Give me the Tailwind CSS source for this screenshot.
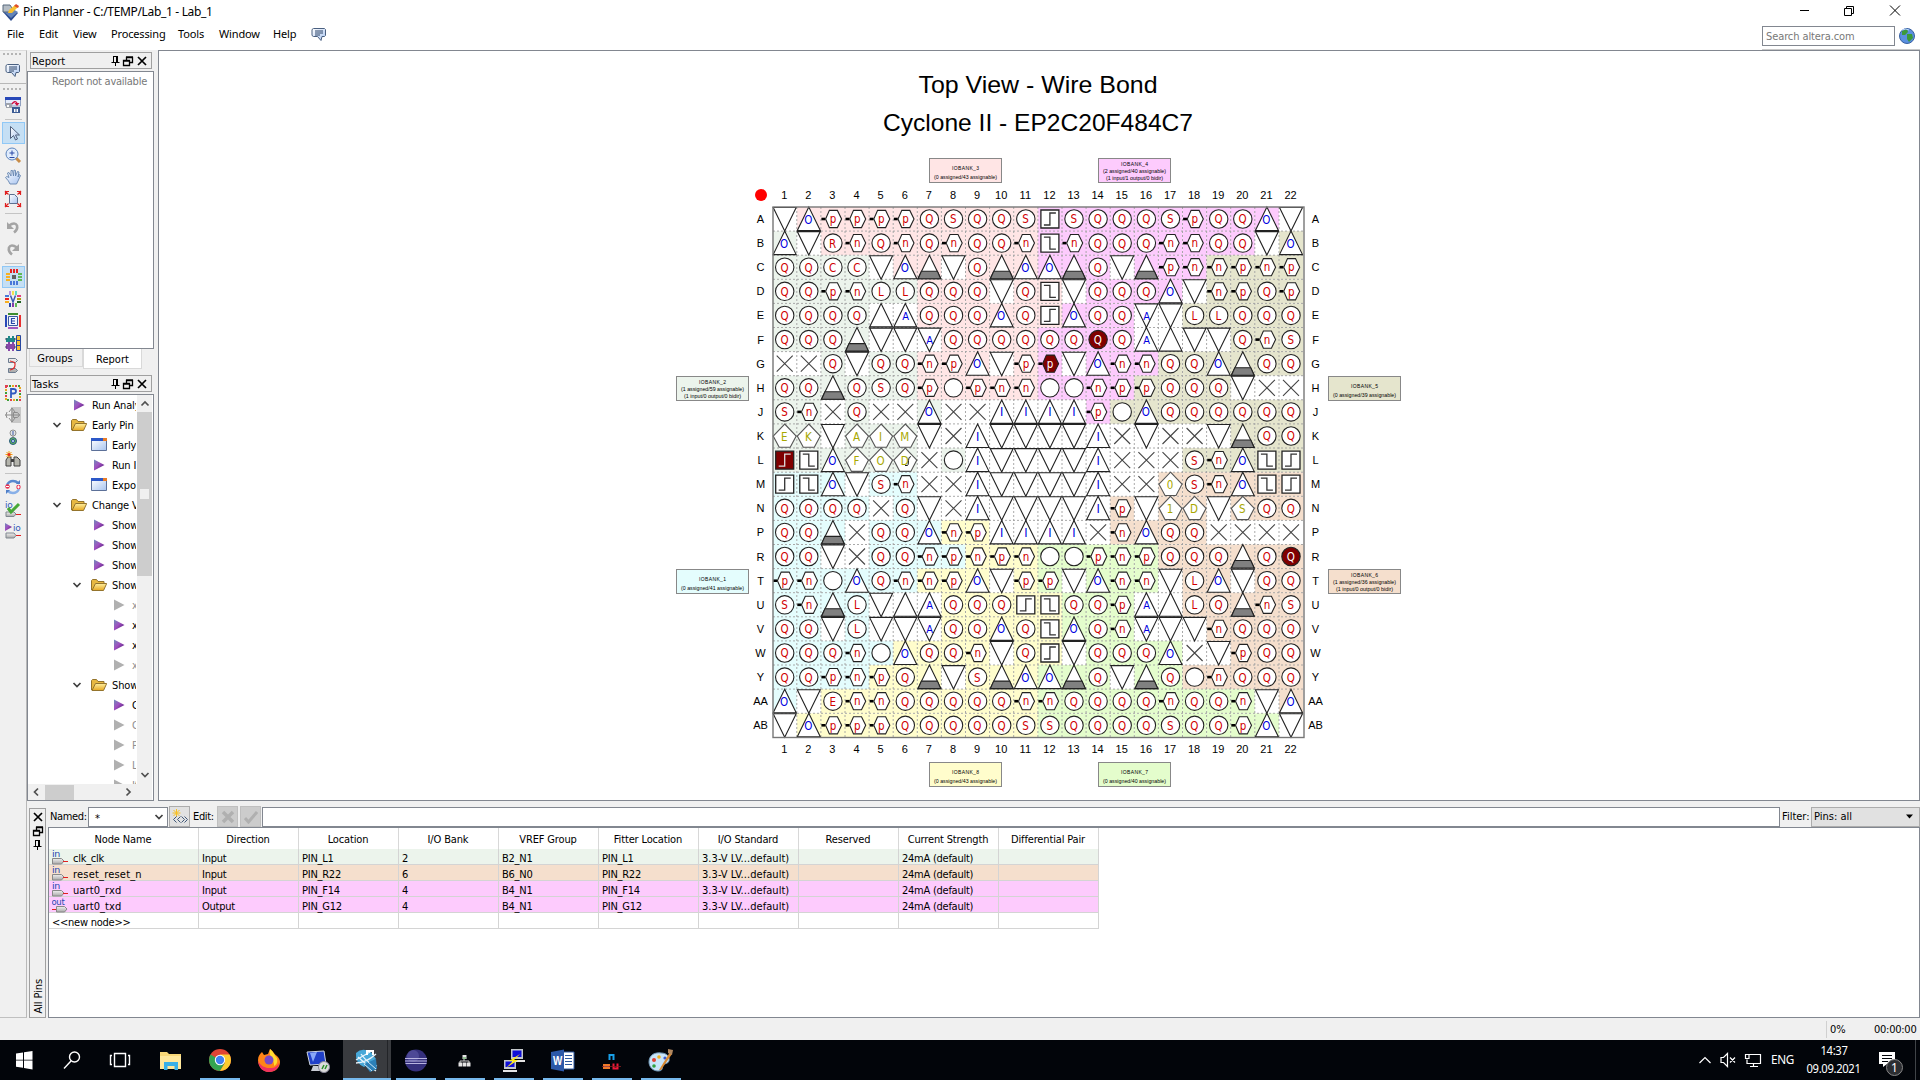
<!DOCTYPE html>
<html lang="en">
<head>
<meta charset="utf-8">
<title>Pin Planner - C:/TEMP/Lab_1 - Lab_1</title>
<script src="https://cdn.jsdelivr.net/npm/@tailwindcss/browser@4"></script>
</head>
<body class="w-[1920px] h-[1080px] overflow-hidden bg-[#f0f0f0] flex flex-col font-['DejaVu_Sans_Condensed','DejaVu_Sans',sans-serif] text-[11px] leading-4 text-black tracking-[-0.35px]">

<svg class="absolute w-0 h-0">
  <defs>
    <linearGradient id="gp" x1="0" y1="0" x2="1" y2="1"><stop offset="0" stop-color="#6f8fb8"/><stop offset=".45" stop-color="#a050c0"/><stop offset="1" stop-color="#40106a"/></linearGradient>
    <linearGradient id="gf" x1="0" y1="0" x2="0" y2="1"><stop offset="0" stop-color="#fff0a0"/><stop offset="1" stop-color="#e8a820"/></linearGradient>
    <linearGradient id="gb" x1="0" y1="0" x2="1" y2="1"><stop offset="0" stop-color="#ffffff"/><stop offset="1" stop-color="#a8c4f0"/></linearGradient>
    <linearGradient id="gg" x1="0" y1="0" x2="0" y2="1"><stop offset="0" stop-color="#f0f0f0"/><stop offset="1" stop-color="#a8a8a8"/></linearGradient>
    <symbol id="chat" viewBox="0 0 16 16"><path d="M2.500 1.500h11l1 1v6l-1 1H11l-1 4-3.500-4h-4l-1.500-1v-6z" fill="url(#gb)" stroke="#4a6080"/><path d="M4 4h8M4 6h8M4 8h5" stroke="#2c4468" fill="none"/></symbol>
    <symbol id="pin" viewBox="0 0 12 12"><path d="M3.500 1v6M3.500 1.500h4M1.500 7.500h8M5.500 7v4" stroke="#000" fill="none"/><path d="M7 1v6" stroke="#000" stroke-width="2"/></symbol>
    <symbol id="dock" viewBox="0 0 12 12"><path d="M4.500 5V2.500h6v5H8M4 2h7M1.500 5.500h6v5h-6zM1 6h7" stroke="#000" fill="none" stroke-width="1.300"/></symbol>
    <symbol id="close" viewBox="0 0 12 12"><path d="M2 2l8 8M10 2l-8 8" stroke="#000" fill="none" stroke-width="1.700"/></symbol>
    <symbol id="play" viewBox="0 0 16 16"><path d="M3 2.500v11L13.500 8z" fill="url(#gp)"/></symbol>
    <symbol id="playg" viewBox="0 0 16 16"><path d="M3 2.500v11L13.500 8z" fill="#b0b0b0"/></symbol>
    <symbol id="folder" viewBox="0 0 16 16"><path d="M.5 13V3.500l1-1h4l1.500 2h6V7" fill="#e8b840" stroke="#94742c"/><path d="M1 13.500L4.500 6.500h11.200L12.500 13.500z" fill="url(#gf)" stroke="#94742c"/></symbol>
    <symbol id="win" viewBox="0 0 16 16"><path d="M.5 2.500h15v11H.5z" fill="url(#gb)" stroke="#5c7098"/><path d="M0 1h12v3H0z" fill="#2c58c8"/><path d="M12 1h4v3h-4z" fill="#e87c28"/></symbol>
    <symbol id="chev" viewBox="0 0 12 12"><path d="M2.500 4L6 7.500 9.500 4" stroke="#404040" fill="none" stroke-width="1.700"/></symbol>
    <symbol id="nodein" viewBox="0 0 16 16"><path d="M.5 9.500h9l2.500 2.500-2.500 3H.5z" fill="url(#gg)" stroke="#888"/><path d="M11 12.500h5" stroke="#e02020"/><text x="0" y="7.500" font-size="9.500" fill="#2848b0" font-family="DejaVu Sans">in</text></symbol>
    <symbol id="nodeout" viewBox="0 0 16 16"><path d="M4.500 9.500h8l2.500 2.500-2.500 3h-8z" fill="url(#gg)" stroke="#888"/><path d="M0 12.500h4" stroke="#e02020"/><text x="-.5" y="7.500" font-size="8.500" fill="#2848b0" font-family="DejaVu Sans">out</text></symbol>
  </defs>
</svg>

<!-- title bar -->
<header class="h-[22px] shrink-0 bg-white flex items-center justify-between">
  <div class="flex items-center pl-0.5 pt-0.5 gap-1">
    <svg class="w-[17px] h-[17px]" viewBox="0 0 17 17"><path d="M1 8l8-3 7 4-7 8z" fill="#2c4c90"/><path d="M1 7l8-3 7 4-7 6z" fill="#6484b8"/><path d="M1 1h7l2 3-2 4H1z" fill="#b4bcc4" stroke="#56687c"/><path d="M6 9l1-3 6-5 3 2-6 6z" fill="#f8c030"/><path d="M12 2l2-2 3 2-1 2z" fill="#e04c28"/></svg>
    <span class="font-['Noto_Sans','Open_Sans',sans-serif] text-[12px] tracking-[-0.33px]">Pin Planner - C:/TEMP/Lab_1 - Lab_1</span>
  </div>
  <svg class="w-[120px] h-[22px]" viewBox="1800 0 120 22" fill="none" stroke="#000"><path d="M1799 10.500h10M1844.500 8.500h7v7h-7zM1846.500 8V6.500h7v7H1852M1890 5.500l10 10M1900 5.500l-10 10"/></svg>
</header>

<!-- menu bar -->
<nav class="h-7 shrink-0 bg-white flex justify-between">
  <div class="flex items-center h-6 pl-[7px] font-['Noto_Sans',sans-serif] text-[11px] tracking-[-0.15px]">
    <span class="w-8">File</span><span class="w-[34px]">Edit</span><span class="w-[38px]">View</span><span class="w-[67px]">Processing</span><span class="w-[41px]">Tools</span><span class="w-[54px]">Window</span><span class="w-[38px]">Help</span>
    <svg class="w-4 h-4 mt-px"><use href="#chat"/></svg>
  </div>
  <div class="flex items-start gap-1 pt-1 pr-[5px] border-b border-[#c8c8c8]">
    <div class="w-[133px] h-5 border border-[#828790] text-[#787878] pl-[3px] leading-[19px] tracking-[-0.1px]">Search altera.com</div>
    <svg class="w-4 h-4 mt-0.5" viewBox="0 0 16 16"><circle cx="8" cy="8" r="7.500" fill="#5a90e0" stroke="#3860a0"/><path d="M3 3l5-2 1 3-3 3-3 0zM8 6l5 0 1 4-4 4-2-3z" fill="#3c9a3c"/><path d="M3 2q4-2 7 0" stroke="#c0d8ff" fill="none"/></svg>
  </div>
</nav>

<div class="h-[968px] shrink-0 flex">
  <!-- vertical toolbar -->
  <aside id="tools" class="w-[27px] shrink-0 border-r border-[#b8b8b8] border-t border-t-[#dcdcdc] border-b border-b-[#c0c0c0] flex flex-col"></aside>

  <main class="flex-1 flex flex-col min-w-0">
    <div class="h-[751px] flex">
      <!-- docks -->
      <section class="w-[128px] shrink-0 flex flex-col">
        <div class="mt-0.5 ml-[3px] w-[122px] h-[17px] border border-[#a0a0a0] flex items-center pl-px">
          <span class="flex-1 pt-[3px] tracking-[0.1px]">Report</span>
          <svg class="w-3 h-3"><use href="#pin"/></svg><svg class="w-3 h-3"><use href="#dock"/></svg><svg class="w-3 h-3 ml-0.5 mr-[3px]"><use href="#close"/></svg>
        </div>
        <div class="mt-0.5 h-[278px] w-[127px] border border-[#828790] bg-white text-[#787878] text-right pr-1.5 pt-0.5 tracking-[-0.25px]">Report not available</div>
        <div class="h-[20px] flex pl-0.5 items-start tracking-[0px]">
          <div class="w-[54px] h-[18px] border border-[#d9d9d9] border-t-0 text-center leading-[19px] pr-0.5">Groups</div>
          <div class="w-[59px] h-[20px] border border-[#d9d9d9] border-t-0 bg-white text-center leading-[21px]">Report</div>
        </div>
        <div class="mt-1.5 ml-[3px] w-[122px] h-[17px] border border-[#a0a0a0] flex items-center pl-px">
          <span class="flex-1 pt-[3px] tracking-[0.1px]">Tasks</span>
          <svg class="w-3 h-3"><use href="#pin"/></svg><svg class="w-3 h-3"><use href="#dock"/></svg><svg class="w-3 h-3 ml-0.5 mr-[3px]"><use href="#close"/></svg>
        </div>
        <div class="mt-0.5 h-[407px] w-[127px] border border-[#828790] bg-white flex flex-col">
          <div class="h-[389px] flex">
            <div id="tree" class="w-[108px] h-full overflow-hidden"></div>
            <div class="w-[15px] ml-px bg-[#f0f0f0] flex flex-col items-center">
              <svg class="h-[17px] w-3" viewBox="0 0 12 17"><path d="M2.500 10.500L6 7l3.500 3.500" stroke="#505050" fill="none" stroke-width="1.700"/></svg>
              <div class="h-[164px] w-[15px] bg-[#cdcdcd] flex flex-col items-center pt-[77px]"><div class="w-[9px] h-2.5 bg-[#f0f0f0]"></div></div>
              <div class="flex-1"></div>
              <svg class="h-[17px] w-3" viewBox="0 0 12 17"><path d="M2.500 6L6 9.500 9.500 6" stroke="#505050" fill="none" stroke-width="1.700"/></svg>
            </div>
          </div>
          <div class="h-4 w-[124px] bg-[#f0f0f0] flex items-center">
            <svg class="w-[17px] h-4" viewBox="0 0 17 16"><path d="M10 4.500L6.500 8l3.500 3.500" stroke="#505050" fill="none" stroke-width="1.700"/></svg>
            <div class="w-[29px] h-[15px] bg-[#cdcdcd]"></div><div class="flex-1"></div>
            <svg class="w-[32px] h-4" viewBox="0 0 32 16"><path d="M6.500 4.500L10 8l-3.500 3.500" stroke="#505050" fill="none" stroke-width="1.700"/></svg>
          </div>
        </div>
      </section>
      <!-- package view -->
      <section class="ml-[3px] w-[1762px] h-[751px] border border-[#828790] bg-white overflow-hidden">
        <svg id="chip" class="block w-[1760px] h-[749px]" viewBox="159 51 1760 749"></svg>
      </section>
    </div>

    <!-- all pins -->
    <div class="flex-1 flex pt-[5px]">
      <div class="ml-0.5 mt-[2px] w-[17px] h-[210px] border border-[#a0a0a0] flex flex-col items-center">
        <svg class="w-3 h-3 mt-0.5"><use href="#close"/></svg>
        <svg class="w-3 h-3 mt-0.5"><use href="#dock"/></svg>
        <svg class="w-3 h-3 mt-0.5"><use href="#pin"/></svg>
        <div class="flex-1"></div>
        <span class="[writing-mode:vertical-rl] rotate-180 mb-[3px] ml-0.5 tracking-[-0.1px]">All Pins</span>
      </div>
      <div class="ml-0.5 flex-1 flex flex-col">
        <div class="h-[21px] flex items-center">
          <span class="w-[40px] pl-0.5">Named:</span>
          <div class="w-[80px] h-5 border border-[#828790] bg-white flex items-center justify-between pl-1.5 pr-0.5"><span class="pt-1">*</span><svg class="w-3 h-3"><use href="#chev"/></svg></div>
          <div class="ml-px w-[21px] h-[21px] border border-[#acacac] bg-[#e1e1e1] grid place-items-center"><svg class="w-4 h-4" viewBox="0 0 16 16" fill="none"><path d="M4.500 0v8M.5 4h8M1.500 1l6 6M7.500 1l-6 6" stroke="#f8c020"/><path d="M4.500 7.500L1.500 10.500l3 3M8.500 7.500l-3 3 3 3M9.500 7.500l3 3-3 3M12.500 7.500l3 3-3 3" stroke="#405878"/></svg></div>
          <span class="ml-[3px] w-6">Edit:</span>
          <div class="w-[21px] h-[21px] bg-[#cccccc] border border-[#bfbfbf] grid place-items-center"><svg class="w-[14px] h-[14px]" viewBox="0 0 14 14"><path d="M2 2l10 10M12 2L2 12" stroke="#b0b0b0" stroke-width="3.500"/></svg></div>
          <div class="ml-0.5 w-[21px] h-[21px] bg-[#cccccc] border border-[#bfbfbf] grid place-items-center"><svg class="w-[14px] h-[14px]" viewBox="0 0 14 14" fill="none"><path d="M1 8l3.500 4L13 2" stroke="#b0b0b0" stroke-width="3"/></svg></div>
          <div class="ml-px w-[1518px] h-5 border border-[#828790] bg-white"></div>
          <span class="ml-0.5 w-[29px] whitespace-nowrap tracking-[0px]">Filter:</span>
          <div class="flex-1 h-5 border border-[#acacac] bg-[#e1e1e1] flex items-center justify-between pl-0.5 pr-1.5 tracking-[0px]"><span>Pins: all</span><svg class="w-[7px] h-[5px]" viewBox="0 0 7 5"><path d="M0 .5h7L3.500 4.500z"/></svg></div>
        </div>
        <div class="h-[191px] border border-[#828790] bg-white">
          <div id="pins" class="grid w-[1050px] grid-cols-[150px_repeat(9,100px)]"></div>
        </div>
      </div>
    </div>
  </main>
</div>

<!-- status bar -->
<footer class="h-[22px] shrink-0 flex items-center justify-end">
  <div class="h-[17px] border-l border-[#d0d0d0] w-[48px] pl-[3px] pt-px tracking-[0px]">0%</div>
  <div class="w-[46px] whitespace-nowrap pt-px tracking-[-0.25px]">00:00:00</div>
</footer>

<!-- taskbar -->
<div class="h-10 shrink-0 bg-[#02050a]">
<svg class="block w-[1920px] h-10" viewBox="0 0 1920 40">
  <g fill="#fff"><path d="M16 13.500l7-1v7.200h-7zM24 12.300l8.500-1.300v8.700H24zM16 20.600h7v7.200l-7-1zM24 20.600h8.500v8.800L24 28.100z"/></g>
  <g fill="none" stroke="#fff" stroke-width="1.400"><circle cx="74.500" cy="17" r="5"/><path d="M71 21l-7 7.500"/><path d="M114.500 13.500h11v13h-11zM112 15.500h-1.500v9h1.500M128 15.500h1.500v9H128"/></g>
  <path d="M160 12h7l2 2h12v15h-21z" fill="#f8d878"/><path d="M160 16h21v13h-21z" fill="#ffe89c"/><path d="M164 22h14v8h-3.500v-4h-7v4H164z" fill="#38b0e8"/>
  <circle cx="220" cy="20" r="11" fill="#e04434"/><path d="M220 20L210.500 14.500A11 11 0 0 0 220 31l4.800-8.200z" fill="#34a450"/><path d="M220 31A11 11 0 0 0 229.500 14.500H220l5 8.200z" fill="#fccc30"/><circle cx="220" cy="20" r="5.200" fill="#fff"/><circle cx="220" cy="20" r="4.200" fill="#4080f0"/>
  <path d="M258 20c0-4 2-6 4-8l2 3 4-1 2-5c4 3 4 5 7 7 2 2 3 4 3 6 0 6-5 10-11 10s-11-5-11-12z" fill="#ff8418"/><path d="M258 21c1 7 5 11 11 11s10-4 10-9c-3 5-6 5-10 5s-8-2-11-7z" fill="#f03060"/><path d="M270 9c4 3 4 6 7 9 1 5-1 7-3 8 1-6-6-9-4-17z" fill="#ffdc30"/><circle cx="269" cy="20" r="4.500" fill="#7848c8"/>
  <path d="M307 12l17-1 2 13-16 1z" fill="#2040c8" stroke="#ccd4e0"/><path d="M310 13l7-1-4 10z" fill="#88a8f8"/><path d="M313 26h8l2 5h-12z" fill="#c8ccd4"/><circle cx="324" cy="27" r="5.500" fill="#dcdcdc" stroke="#889"/><path d="M322 29l2-4M325 29l2-4" stroke="#289028" stroke-width="1.500"/>
  <path d="M343 0h48v40h-48z" fill="#393b3f"/><path d="M387.500 0v40" stroke="#222428"/>
  <path d="M356 13q6-6 15-1l5 7-12 8q-9-4-8-14z" fill="#48a8d8"/><path d="M356 20l14-8M356 23q10 0 20-9M358 17q8 8 18 14M361 14q7 10 16 12" stroke="#e8f4fc" fill="none" stroke-width="1.300"/><path d="M364 24l12-5 1 10-7 3z" fill="#2c80b8"/><path d="M364 24l8 7M368 22l8 7" stroke="#d0e8f4"/><path d="M367 15v-4h6v4" stroke="#fff" stroke-width="2" fill="none"/>
  <circle cx="416" cy="20.500" r="11" fill="#35307c"/><circle cx="413" cy="16" r="6" fill="#5e58a8" opacity=".6"/><path d="M405 18.500h22M405 21h22M405.500 23.500h21" stroke="#b8b4e0" stroke-width="1"/>
  <path d="M464 17v4M460 24v-3h9v3" stroke="#ccc" fill="none"/><path d="M462.500 15h4v4h-4zM458.500 22.500h4v4h-4zM463 22.500h3.500v4H463zM467 22.500h3.500v4H467z" fill="#e4e4e4"/><path d="M463 17.500h3v1h-3z" fill="#40a040"/>
  <path d="M511 9h12v10h-12zM504 20h12v9h-12z" fill="#c4c8cc"/><path d="M512.500 10.500h9v6.500h-9zM505.500 21.500h9v5.500h-9z" fill="#1010d8"/><path d="M512 20h13v2h-13zM503 30h14v2h-14z" fill="#e4e4e4"/><path d="M520 14l-11 7 4 0-7 7 12-8-4 0z" fill="#fce818"/>
  <path d="M560 12h14v17h-14z" fill="#fff" stroke="#2c58a0"/><path d="M565 15.500h7M565 18.500h7M565 21.500h7M565 24.500h7" stroke="#2c58a0"/><path d="M551 12l13-2.500v22L551 29z" fill="#2c58a8"/><text x="553" y="25" font-size="12" font-weight="bold" fill="#fff" font-family="Liberation Sans" textLength="9" lengthAdjust="spacingAndGlyphs">W</text>
  <path d="M609.500 20v-5h4v5" fill="none" stroke="#18a0e8" stroke-width="2"/><path d="M603 24h7v5h-7z" fill="#f07828"/><path d="M604 26.500h5" stroke="#fff"/><path d="M613.500 23.500v5h4v-5" fill="none" stroke="#f01838" stroke-width="2"/><path d="M602 26.500h19" stroke="#882020" stroke-width=".8"/>
  <path d="M649 22c0-7 6-10 12-9 6 0 9 4 8 8-1 3-4 2-6 4-1 3 0 6-5 6-5 0-9-4-9-9z" fill="#c8e4f8" stroke="#7098b8"/><circle cx="654" cy="20" r="2" fill="#e04030"/><circle cx="659" cy="17" r="1.800" fill="#f0b020"/><circle cx="654" cy="26" r="1.800" fill="#30a040"/><circle cx="665" cy="18" r="1.600" fill="#3858d0"/><path d="M670 12l-11 18 2 0 11-16z" fill="#d88830"/><path d="M668 9l5 1-1 5-4-2z" fill="#b08860"/>
  <path d="M200 38h40v2h-40zM343 38h48v2h-48zM396 38h40v2h-40zM445 38h40v2h-40zM494 38h40v2h-40zM543 38h40v2h-40zM592 38h40v2h-40zM641 38h40v2h-40z" fill="#76b9ed"/>
  <g fill="none" stroke="#fff" stroke-width="1.200">
    <path d="M1699.500 23l5.500-5.500 5.500 5.500"/>
    <path d="M1721 17.500h2.500l4-4v13l-4-4H1721zM1730 17.500l5 5M1735 17.500l-5 5"/>
    <path d="M1749 14.500h11.500v9H1747v-4M1753.500 24v2M1750 26.500h8M1745.500 14.500h3.500v4h-3.500z"/>
  </g>
  <g fill="#fff" font-family="Noto Sans, sans-serif" font-size="12">
    <text x="1771" y="24" textLength="23" lengthAdjust="spacingAndGlyphs">ENG</text>
    <text x="1820.500" y="15" textLength="27" lengthAdjust="spacingAndGlyphs">14:37</text>
    <text x="1806.500" y="33" textLength="54" lengthAdjust="spacingAndGlyphs">09.09.2021</text>
  </g>
  <path d="M1879 12h16v12h-8l-4 3v-3h-4z" fill="#fff"/><path d="M1882 15.500h10M1882 18.500h10M1882 21.500h6" stroke="#02050a"/>
  <circle cx="1894.500" cy="27.500" r="8" fill="#2c2e32" stroke="#888"/><text x="1891" y="32" font-size="12" fill="#fff" font-family="Noto Sans, sans-serif">1</text>
  <path d="M1915.500 0v40" stroke="#404448"/>
</svg>
</div>

<script>
// ---- vertical toolbar ----
const dots = '<path d="M4 0v2M8 0v2M12 0v2M16 0v2M20 0v2" stroke="#b4b4b4" stroke-width="2"/>';
const icons = {
  chat: '<path d="M2.500 2.500h11l1 1v6l-1 1H11l-1 4-3.500-4h-4l-1.500-1v-6z" fill="url(#gb)" stroke="#4a6080"/><path d="M4 5h8M4 7h8M4 9h5" stroke="#2c4468" fill="none"/>',
  report: '<path d="M.5 1h15v8h-15z" fill="#e4ecfc" stroke="#90a0c0"/><path d="M0 0h16v3H0z" fill="#2848b8"/><path d="M1 6h6v5H1z" fill="#a0a4ac"/><path d="M7 10h8v6H7z" fill="#3c5c94"/><path d="M2 8h2v2H2zM9 12h1.500v3H9zM11.500 12H13v3h-1.500z" fill="#fff"/><path d="M7 7q3-4 5-1" fill="none" stroke="#d01040" stroke-width="1.300"/><path d="M9.500 6h5L12 9z" fill="#d01040"/>',
  arrow: '<path d="M5.500 1.500v12l3-3 2 4.500 2-1-2-4h4z" fill="url(#gb)" stroke="#50607c"/>',
  zoom: '<path d="M11 11l4 4" stroke="#c88c48" stroke-width="3"/><circle cx="7" cy="7" r="6" fill="#e0ecfc" stroke="#5c84bc"/><path d="M4.500 6h5M7 3.500v5M4.500 10.500h5" stroke="#2848a8"/>',
  hand: '<path d="M5 15q-1-3-4.500-6.500 1-2 3.500 0L2.500 4l1.500-.5L6 7V1.500h1.500L8.500 7 9 1l1.500.500V7l2-4.500 1.500.500L13 8l1.500-2.500 1 1L13 12l-1.500 3z" fill="url(#gb)" stroke="#6484b0" stroke-width=".9"/>',
  fit: '<path d="M4.500 3.500h5l3 3v6h-8z" fill="url(#gb)" stroke="#5c7090"/><path d="M0 .5h4M.5 0v4M0 0l3.500 3.500M12 .5h4M15.500 0v4M16 0l-3.500 3.500M0 15.500h4M.5 12v4M0 16l3.500-3.500M12 15.500h4M15.500 12v4M16 16l-3.500-3.500" stroke="#e02020" stroke-width="1.200"/>',
  undo: '<path d="M4 6.500q6-4 8 0 1 4-3 7" fill="none" stroke="#a4a4a4" stroke-width="2.600"/><path d="M2 3v7h7z" fill="#a4a4a4"/>',
  redo: '<path d="M12 6.500q-6-4-8 0-1 4 3 7" fill="none" stroke="#a4a4a4" stroke-width="2.600"/><path d="M14 3v7H7z" fill="#a4a4a4"/>',
  pads: '<path d="M5 0h2v4H5zM8 0h2v4H8zM11 0h2v4h-2z" fill="#e82020"/><path d="M5 12h2v4H5zM8 12h2v4H8zM11 12h2v4h-2z" fill="#4878d8"/><path d="M1 4h4v2H1zM1 7h4v2H1zM1 10h4v2H1z" fill="#f8b020"/><path d="M13 4h4v2h-4zM13 7h4v2h-4zM13 10h4v2h-4z" fill="#60b858"/><path d="M7 6h4v4H7z" fill="#606060"/>',
  v: '<path d="M4 0h2v4H4z" fill="#b894e0"/><path d="M7 0h2v4H7z" fill="#f4e050"/><path d="M10 0h2v4h-2z" fill="#60d8c8"/><path d="M0 4h4v2H0z" fill="#4878d8"/><path d="M0 7h4v2H0z" fill="#e82020"/><path d="M0 10h4v2H0z" fill="#f8b020"/><path d="M12 4h4v2h-4z" fill="#e04080"/><path d="M12 7h4v2h-4z" fill="#b09810"/><path d="M12 10h4v2h-4z" fill="#206020"/><path d="M4 12h2v4H4z" fill="#2848a8"/><path d="M7 12h2v4H7z" fill="#8838a8"/><path d="M10 12h2v4h-2z" fill="#60b858"/><path d="M5.500 4.500L8 11l2.500-6.500" fill="none" stroke="#3858b0" stroke-width="1.500"/>',
  e: '<path d="M3 0h10v2H3z" fill="#3c8c30"/><path d="M3 14h10v2H3z" fill="#a058c0"/><path d="M0 2h2v12H0z" fill="#2848b8"/><path d="M14 2h2v12h-2z" fill="#e83030"/><path d="M3.500 3.500h9v9h-9z" fill="#f0f4ff" stroke="#3858a0"/><path d="M10 5.500H6.500v5H10M6.500 8H10" fill="none" stroke="#2848a8" stroke-width="1.200"/>',
  f: '<path d="M1 3h9v4H1zM3 1h2v8H3zM7 1h2v8H7z" fill="#208888"/><path d="M1 9h9v5H1zM3 7h2v9H3zM7 7h2v9H7z" fill="#8848a8"/><path d="M0 4h2M0 12h2M9 4h2M9 12h2" stroke="#404860"/><path d="M11.500.5h4v15h-4z" fill="#f8c030" stroke="#2848a0"/><path d="M11.500 5.500h4M11.500 10.500h4" stroke="#2848a0"/>',
  link: '<path d="M3.500 1.500h7l2 2-2 2h-7zM3.500 11.500h7l2 2-2 2h-7z" fill="url(#gg)" stroke="#6c7c90"/><path d="M5 4q6 1 5 4 0 4-5 5" fill="none" stroke="#e02828" stroke-width="1.200"/>',
  p: '<path d="M1 1h14v14H1z" fill="none" stroke="#e04050" stroke-width="2" stroke-dasharray="2 7"/><path d="M1 1h14v14H1z" fill="none" stroke="#3c9c38" stroke-width="2" stroke-dasharray="2 7" stroke-dashoffset="-3"/><path d="M1 1h14v14H1z" fill="none" stroke="#e8a820" stroke-width="2" stroke-dasharray="2 7" stroke-dashoffset="-6"/><path d="M6 13V4h2.500q2.500 0 2.500 2.200T8.500 8.500H6" fill="none" stroke="#3058c0" stroke-width="1.800"/>',
  gray: '<path d="M6 0h10v16H6z" fill="#c8c8c8"/><path d="M0 8h13l2 0M7 1v14M4 5l3-4 3 4M2 5l-1 3 1 3M4 11l3 4 3-4M8.500 5.500h4l2 2.500-2 2.500h-4z" stroke="#8c8c8c" fill="none"/>',
  lamp: '<circle cx="8" cy="4" r="3" fill="#e4e4e4" stroke="#909090"/><path d="M8 2v4" stroke="#3858a8"/><circle cx="8" cy="12" r="3.500" fill="#60b858" stroke="#28587c"/><circle cx="8" cy="12" r="1.500" fill="#d8f0ff" stroke="#2848a0"/><path d="M8 7v2" stroke="#888"/>',
  find: '<path d="M1 15V9l2-3h3v9zM9 15V6h3l3 3v6z" fill="#b4b4ac" stroke="#404040"/><path d="M6 8h3v3H6z" fill="#404040"/><path d="M4 0v7M.5 3.500h7M1.500 1l5 5M6.500 1l-5 5" stroke="#f0a010"/><circle cx="4" cy="3.500" r="1.500" fill="#e83020"/>',
  cycle: '<path d="M2 6q2-4 6-4 3 0 5 2" fill="none" stroke="#5888d0" stroke-width="2.500"/><path d="M14 10q-2 4-6 4-3 0-5-2" fill="none" stroke="#88b0e8" stroke-width="2.500"/><path d="M11 5h4V1zM5 11H1v4z" fill="#5080c8"/><circle cx="2.500" cy="7.500" r="2.200" fill="#e83050"/><circle cx="13.500" cy="8" r="2.200" fill="#e83050"/><path d="M1 7.500h3M12 8h3M13.500 6.500v3" stroke="#fff"/>',
  iocheck: '<text x="0" y="7" font-size="9" fill="#3058b8" font-family="DejaVu Sans">io</text><path d="M1 11h8l2 2-2 2.500H1z" fill="url(#gg)" stroke="#808890"/><path d="M11 13.500h5" stroke="#e02020"/><path d="M3 7l3 4 8-8" fill="none" stroke="#48a838" stroke-width="3"/>',
  iorun: '<path d="M0 0v8l7-4z" fill="url(#gp)"/><text x="8" y="7.500" font-size="9" fill="#3058b8" font-family="DejaVu Sans">io</text><path d="M1 10h8l2 2.500-2 2.500H1z" fill="url(#gg)" stroke="#808890"/><path d="M11 12.500h5" stroke="#e02020"/>'
};
const icon = (n, on) => `<div class="h-[22px] w-[23px] ml-0.5 shrink-0 grid place-items-center ${on ? 'bg-[#c5dff4] border border-[#90c8f6]' : ''}"><svg class="w-4 h-4 overflow-visible mr-px" viewBox="0 0 16 16">${icons[n]}</svg></div>`;
const sep = '<div class="h-1.5 shrink-0 flex items-center pl-[5px]"><div class="w-[17px] h-px bg-[#c4c4c4]"></div></div>';
document.getElementById('tools').innerHTML =
  `<svg class="w-6 h-0.5 mt-0.5 mb-1 shrink-0">${dots}</svg>` + icon('chat') +
  `<div class="h-px mt-0.5 w-full bg-[#b8b8b8] shrink-0"></div><svg class="w-6 h-0.5 mt-1 mb-1 shrink-0">${dots}</svg>` + icon('report') + sep +
  icon('arrow', true) + ['zoom', 'hand', 'fit'].map(n => icon(n)).join('') + sep +
  icon('undo') + icon('redo') + sep + icon('pads', true) + ['v', 'e', 'f', 'link'].map(n => icon(n)).join('') + sep +
  ['p', 'gray', 'lamp', 'find'].map(n => icon(n)).join('') + sep + ['cycle', 'iocheck', 'iorun'].map(n => icon(n)).join('');

// ---- task tree: [level, icon, label, disabled] ----
const tree = [
  [1,'play','Run Analysis'],[1,'folder','Early Pin Planning'],[2,'win','Early Pin'],[2,'play','Run I/O'],[2,'win','Export'],
  [1,'folder','Change View'],[2,'play','Show Pins'],[2,'play','Show VREF'],[2,'play','Show Edges'],[2,'folder','Show DQ/DQS'],
  [3,'playg','x4 Mode',1],[3,'play','x8 Mode'],[3,'play','x16 Mode'],[3,'playg','x32 Mode',1],[2,'folder','Show Clock'],
  [3,'play','CLK'],[3,'playg','CLK',1],[3,'playg','PLL',1],[3,'playg','LVDS',1],[3,'playg','Jtag',1]
];
const indent = { 1: 'pl-[23px]', 2: 'pl-[43px]', 3: 'pl-[63px]' };
document.getElementById('tree').innerHTML = tree.map(([l, i, t, g]) =>
  `<div class="h-5 flex items-center ${indent[l]}"><svg class="w-3 h-3 shrink-0">${i === 'folder' ? '<use href="#chev"/>' : ''}</svg><svg class="w-4 h-4 ml-2 mr-[5px] shrink-0"><use href="#${i}"/></svg><span class="whitespace-nowrap pt-0.5 tracking-[-0.15px] ${g ? 'text-[#909090]' : ''}">${t}</span></div>`).join('');

// ---- pin table ----
const head = ['Node Name','Direction','Location','I/O Bank','VREF Group','Fitter Location','I/O Standard','Reserved','Current Strength','Differential Pair'];
const rows = [
  ['bg-[#ecf4ec]','clk_clk','Input','PIN_L1','2','B2_N1'],
  ['bg-[#f5dfcd]','reset_reset_n','Input','PIN_R22','6','B6_N0'],
  ['bg-[#fdcbfd]','uart0_rxd','Input','PIN_F14','4','B4_N1'],
  ['bg-[#fdcbfd]','uart0_txd','Output','PIN_G12','4','B4_N1']
];
const track = { reset_reset_n: 'tracking-[0.2px]', uart0_rxd: 'tracking-[0.1px]', uart0_txd: 'tracking-[0.1px]', '3.3-V LV...default)': 'tracking-[0.05px]' };
const cell = (t, c, pic = '') => `<div class="h-4 border-r border-b border-[#d4d4d4] pl-[3px] whitespace-nowrap flex items-center ${c}">${pic}<span class="pt-1 ${track[t] || 'tracking-[-0.25px]'}">${t}</span></div>`;
document.getElementById('pins').innerHTML =
  head.map(h => `<div class="h-[21px] border-r border-[#d8d8d8] text-center leading-[23px] pr-px whitespace-nowrap tracking-[-0.15px]">${h}</div>`).join('') +
  rows.map(([c, n, d, l, b, v]) => cell(n, c, `<svg class="w-4 h-4 mr-[5px] shrink-0"><use href="#${d === 'Input' ? 'nodein' : 'nodeout'}"/></svg>`) +
    [d, l, b, v, l, '3.3-V LV...default)', '', '24mA (default)', ''].map(t => cell(t, c)).join('')).join('') +
  cell('&lt;&lt;new node&gt;&gt;', '') + cell('', '').repeat(9);

// ---- package pins ----
const S = 24.11, X0 = 784.7, Y0 = 219;
const names = 'A B C D E F G H J K L M N P R T U V W Y AA AB'.split(' ');
const map = [
  'v O p p p p Q S Q Q S r S Q Q Q S p Q Q O v', 'O v R n Q n Q n Q Q n f n Q Q Q n n Q Q v O',
  'Q Q C C v O G v Q G O O G Q v G p n n p n p', 'Q Q p n L L Q Q Q v Q f v Q Q Q O v n p Q p',
  'Q Q Q Q ^ A Q Q Q O Q r O Q Q a v L L Q Q Q', 'Q Q Q G v v a Q Q Q Q Q Q *Q Q A ^ v v Q n S',
  'x x Q v Q Q n p O v p *p v O n n Q Q O G Q Q', 'Q Q G Q S Q p o p n n o o n p p Q Q Q v x x',
  'S n x Q x x O x x I I I I p o O Q Q Q Q Q Q', 'eE eK v eA eI eM v x I v v v v I x v x x v G Q Q',
  '*r f O eF eO eD x o I v v v v I x x x S n O f r', 'r f O v S n x x I v v v v I x x e0 S n O f r',
  'Q Q Q Q x Q v x I v v v v I p v e1 eD v eS Q Q', 'Q Q G x Q Q O n p I I I I x n O Q Q x x x x',
  'Q Q v x Q Q n p n p n o o p n p Q Q Q G Q *Q', 'p n o O Q n n p O v p p v O n n v L O v Q Q',
  'S n G L v ^ A Q Q Q r f Q Q p A ^ L Q G n S', 'Q Q v L v v a Q Q O Q f O Q n a v v n Q Q Q',
  'Q Q Q n o O Q Q n v Q r v Q Q Q O x v p Q Q', 'Q Q p n p Q G v S G O O G Q v G Q o n Q Q Q',
  'O v E n n Q Q Q Q Q n n Q Q Q Q n Q Q n v O', 'v O p p p Q Q Q Q Q S S Q Q Q Q S Q Q p O v'
].map(r => r.split(' '));
const bank = [
  '3333333333344444444444', '2333333333344444444445', '2222333333344444445555', '2222223333334444445555',
  '2222223333334444555555', '2222223333344445555555', '2222223333344444555555', '2222223333344445555555',
  '2222222000000455555555', '2222222000000055555555', '2222222200000055555555', '1111111000000066666666',
  '1111111000000066666666', '1111111880000066666666', '1111111188877777666666', '1111118888877777666666',
  '1111888888887777666666', '1111888888887777666666', '1111188888887777766666', '1111888888877777766666',
  '1188888888877777777776', '1888888888877777777777'
];
const tint = { 0:'#fff', 1:'#e4fdfd', 2:'#ecf4ec', 3:'#ffe5e5', 4:'#fdcbfd', 5:'#e5e5cd', 6:'#f5dfcd', 7:'#e4fdcc', 8:'#fffdcc' };
const R = n => Math.round(n * 10) / 10;
const txt = (x, y, t, fill, size, extra = '') => `<text x="${R(x)}" y="${R(y)}" font-size="${size}" fill="${fill}" stroke="none" text-anchor="middle" ${extra}>${t}</text>`;
let bg = '', lines = '', g = '';
map.forEach((row, r) => row.forEach((tok, c) => {
  const cx = X0 + c * S, cy = Y0 + r * S, h = S / 2;
  const at = d => `<g transform="translate(${R(cx)} ${R(cy)})">${d}</g>`;
  const white = 'v^AaIx'.includes(tok);
  bg += `<rect x="${R(cx - h)}" y="${R(cy - h)}" width="24.200" height="24.200" fill="${white ? '#fff' : tint[bank[r][c]]}"/>`;
  const on = tok[0] === '*', k = on ? tok.slice(1) : tok;
  const fill = on ? '#800000' : '#fff', ink = on ? '#fff' : '#d00000';
  const up = '<path d="M0-12L11.500 11.500h-23z" fill="#fff"/>', dn = '<path d="M0 12L11.500-11.500h-23z" fill="#fff"/>';
  if (k[0] === 'e') g += at(`<path d="M0-12L11.500 0 5.500 11.300h-11L-11.500 0z" fill="#fff" stroke="#555"/>` + txt(-.5, 4.5, k[1], '#a8a800', 11.5));
  else if (k === 'v') g += at(dn);
  else if (k === '^') g += at(up);
  else if (k === 'O') g += at(up + txt(-.5, 4.5, 'O', '#0000e0', 11.5));
  else if (k === 'I') g += at(up + txt(0, 4.5, 'I', '#0000e0', 12, 'font-family="Liberation Sans"'));
  else if (k === 'A') g += at(up + txt(.3, 4.5, 'A', '#0000e0', 11));
  else if (k === 'a') g += at(dn + txt(.3, 4.5, 'A', '#0000e0', 11));
  else if (k === 'G') g += at(up + '<path d="M-8 4h16L11.300 11.500h-22.600z" fill="#808080"/>');
  else if (k === 'x') g += at('<path d="M-8-8L8 8M8-8L-8 8" stroke="#444"/>');
  else if (k === 'r' || k === 'f') g += at(`<path d="M-9-9H9V9H-9z" fill="${fill}" stroke-width="1.300"/><path d="${k === 'r' ? 'M-6 6H0V-6H6' : 'M-6-6H0V6H6'}" fill="none" stroke="${on ? '#ddd' : '#333'}" stroke-width="1.300"/>`);
  else if (k === 'p' || k === 'n') g += at(`<path d="M-11.500-1.300h4v2.600h-4z" fill="#000" stroke="none"/><path d="M-3.500-8.600h8L8.700 0 4.500 8.600h-8L-7.300 0z" fill="${fill}"/>` + txt(.2, 4.200, k, ink, 11.5));
  else g += at(`<circle r="9.200" fill="${fill}"/>` + (k === 'o' ? '' : txt(-.2, 4.400, k, ink, 11.5)));
}));
for (let i = 1; i < 22; i++) {
  const x = R(X0 - S / 2 + i * S), y = R(Y0 - S / 2 + i * S);
  lines += `<path d="M${x} 207V737M773 ${y}H1303" stroke="#a0a0a0" stroke-width=".9" stroke-dasharray="2 2"/>`;
}
let labels = '';
names.forEach((n, i) => {
  const x = X0 + i * S, y = Math.round(Y0 + i * S + 4);
  labels += txt(x - .5, 199, i + 1, '#000', 11) + txt(x - .5, 753, i + 1, '#000', 11) + txt(760.500, y, n, '#000', 11) + txt(1315.500, y, n, '#000', 11);
});
const boxes = [
  [929.5, 158.5, 3, ['(0 assigned/43 assignable)']], [1098.5, 158.5, 4, ['(2 assigned/40 assignable)', '(1 input/1 output/0 bidir)']],
  [676.5, 376.5, 2, ['(1 assigned/59 assignable)', '(1 input/0 output/0 bidir)']], [1328.5, 376.5, 5, ['(0 assigned/39 assignable)']],
  [676.5, 569.5, 1, ['(0 assigned/41 assignable)']], [1328.5, 569.5, 6, ['(1 assigned/36 assignable)', '(1 input/0 output/0 bidir)']],
  [929.5, 762.5, 8, ['(0 assigned/43 assignable)']], [1098.5, 762.5, 7, ['(0 assigned/40 assignable)']]
].map(([x, y, b, t]) => `<rect x="${x}" y="${y}" width="72" height="24" fill="${tint[b]}" stroke="#888"/>` +
  txt(x + 36, y + (t.length > 1 ? 7.500 : 11.500), 'IOBANK_' + b, '#000', 5, 'textLength="27"') +
  t.map((s, i) => txt(x + 36, y + (t.length > 1 ? 14.500 + i * 7 : 20.500), s, '#000', 5, 'textLength="' + (s.includes('input') ? 57 : 63) + '" lengthAdjust="spacingAndGlyphs"')).join('')).join('');
document.getElementById('chip').innerHTML =
  `<g font-family="Liberation Sans" fill="#000" letter-spacing="0">${txt(1038, 93, 'Top View - Wire Bond', '#000', 24, 'textLength="239" lengthAdjust="spacingAndGlyphs"')}${txt(1038, 131, 'Cyclone II - EP2C20F484C7', '#000', 24, 'textLength="310" lengthAdjust="spacingAndGlyphs"')}${labels}${boxes}</g>` +
  `<circle cx="761" cy="195" r="6" fill="#f00"/>${bg}${lines}<g font-family="DejaVu Sans Condensed, DejaVu Sans" letter-spacing="0" stroke="#222" stroke-width="1.100">${g}</g>` +
  `<rect x="773" y="207" width="531" height="530.500" fill="none" stroke="#777" stroke-width="1.400"/>` +
  `<path d="M905 465.500h2.500q1 0 1-5 0-4 2.500-4" fill="none" stroke="#222"/>`;
</script>
</body>
</html>
